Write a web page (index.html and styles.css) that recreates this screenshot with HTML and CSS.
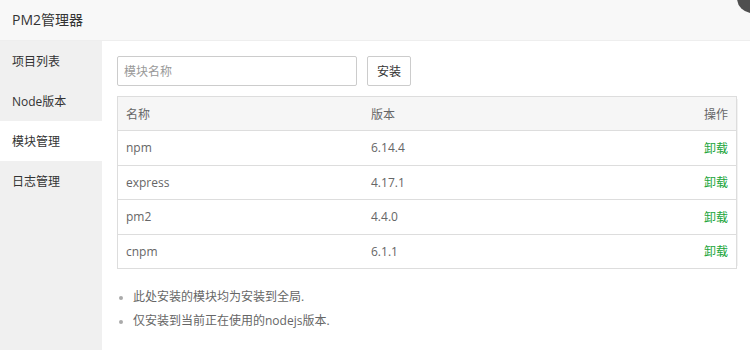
FILE: index.html
```html
<!DOCTYPE html>
<html lang="zh-CN">
<head>
    <meta charset="UTF-8">
    <title>PM2管理器</title>
    <link rel="stylesheet" href="styles.css">
</head>
<body>
    <div class="layer">
        <div class="layer-title">PM2管理器</div>
        <span class="layer-close"></span>
        <div class="layer-body">
            <ul class="tab-nav">
                <li>项目列表</li>
                <li>Node版本</li>
                <li class="on">模块管理</li>
                <li>日志管理</li>
            </ul>
            <div class="tab-con">
                <div class="install-bar">
                    <input class="bt-input" type="text" placeholder="模块名称">
                    <button class="btn">安装</button>
                </div>
                <div class="table-box">
                    <table class="table">
                        <thead>
                            <tr><th>名称</th><th>版本</th><th class="right">操作</th></tr>
                        </thead>
                        <tbody>
                            <tr><td>npm</td><td>6.14.4</td><td class="right"><a class="link">卸载</a></td></tr>
                            <tr><td>express</td><td>4.17.1</td><td class="right"><a class="link">卸载</a></td></tr>
                            <tr><td>pm2</td><td>4.4.0</td><td class="right"><a class="link">卸载</a></td></tr>
                            <tr><td>cnpm</td><td>6.1.1</td><td class="right"><a class="link">卸载</a></td></tr>
                        </tbody>
                    </table>
                </div>
                <ul class="help">
                    <li>此处安装的模块均为安装到全局.</li>
                    <li>仅安装到当前正在使用的nodejs版本.</li>
                </ul>
            </div>
        </div>
    </div>
</body>
</html>
```

FILE: styles.css
```css
body {
    margin: 0;
    font-family: "Open Sans", "Noto Sans CJK SC", sans-serif;
    font-size: 12px;
    color: #666;
    background: #fff;
}
.layer {
    position: relative;
    width: 750px;
    height: 350px;
    overflow: hidden;
}
.layer-title {
    height: 40px;
    line-height: 40px;
    padding-left: 12px;
    font-size: 14px;
    color: #333;
    background: #f8f8f8;
    border-bottom: 1px solid #eee;
}
.layer-close {
    position: absolute;
    top: -17px;
    right: -17px;
    width: 30px;
    height: 30px;
    border-radius: 50%;
    background: #4f4f4f;
}
.layer-body {
    display: flex;
    height: 309px;
}
.tab-nav {
    width: 102px;
    margin: 0;
    padding: 0;
    list-style: none;
    background: #f0f0f0;
}
.tab-nav li {
    height: 40px;
    line-height: 42px;
    padding-left: 12px;
    color: #333;
}
.tab-nav li.on {
    background: #fff;
}
.tab-con {
    flex: 1;
    padding: 15px 13px 0 15px;
}
.install-bar {
    display: flex;
    gap: 10px;
    margin-bottom: 10px;
}
.bt-input {
    width: 240px;
    height: 30px;
    box-sizing: border-box;
    border: 1px solid #ccc;
    border-radius: 2px;
    padding: 0 6px;
    font: inherit;
    color: #555;
}
.bt-input::placeholder {
    color: #999;
}
.btn {
    height: 30px;
    padding: 0 9px;
    border: 1px solid #ccc;
    border-radius: 2px;
    background: #fff;
    font: inherit;
    color: #333;
}
.table-box {
    border: 1px solid #ddd;
    box-shadow: 4px 0 0 -3px #f2f2f2;
}
.table {
    width: 100%;
    border-collapse: collapse;
    table-layout: fixed;
}
.table th,
.table td {
    height: 33.5px;
    padding: 0 8px;
    text-align: left;
    font-weight: normal;
    border-top: 1px solid #ddd;
}
.table thead th {
    height: 33px;
    border-top: 0;
    background: #f6f6f6;
}
.table th:first-child {
    width: 229px;
}
.table .right {
    text-align: right;
}
.link {
    color: #20a53a;
}
.help {
    margin: 16px 0 0;
    padding: 0 0 0 16px;
    color: #666;
}
.help li {
    line-height: 24px;
}
.help li::marker {
    color: #aaa;
    font-size: 10px;
}
```
